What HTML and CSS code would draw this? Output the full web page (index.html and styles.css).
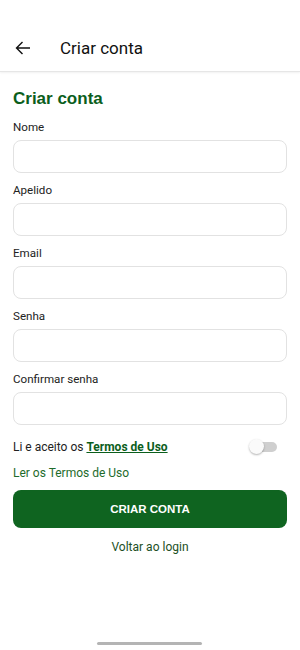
FILE: index.html
```html
<!DOCTYPE html>
<html lang="pt">
<head>
    <meta charset="UTF-8" />
    <meta name="viewport" content="width=device-width, initial-scale=1.0" />
    <title>Criar conta</title>
    <link rel="stylesheet" href="styles.css">
</head>
<body>
<div class="app">
    <div class="top-bar">
        <div class="bar">
            <svg class="back" width="16" height="16" viewBox="0 0 16 16">
                <path d="M15 8H1.5M7.5 2L1.5 8l6 6" fill="none" stroke="#111" stroke-width="1.4"/>
            </svg>
            <div class="bar-title">Criar conta</div>
        </div>
    </div>

    <form class="signup" onsubmit="return false">
        <div class="page-title">Criar conta</div>

        <label class="field-label">Nome</label>
        <input type="text" name="nome" />

        <label class="field-label">Apelido</label>
        <input type="text" name="apelido" />

        <label class="field-label">Email</label>
        <input type="email" name="email" />

        <label class="field-label">Senha</label>
        <input type="password" name="senha" />

        <label class="field-label">Confirmar senha</label>
        <input type="password" name="confirmar" />

        <div class="terms-row">
            <span>Li e aceito os <a href="#" class="terms-link">Termos de Uso</a></span>
            <span class="switch"><span class="thumb"></span></span>
        </div>

        <a href="#" class="read-terms">Ler os Termos de Uso</a>

        <button class="create" type="submit">CRIAR CONTA</button>

        <a href="#" class="back-login">Voltar ao login</a>
    </form>

    <div class="home-bar"></div>
</div>
</body>
</html>
```

FILE: styles.css
```css
html, body {
    margin: 0;
    padding: 0;
    box-sizing: border-box;
}

*, *::before, *::after {
    box-sizing: inherit;
}

body {
    font-family: Roboto, "Noto Sans", Arial, sans-serif;
    background: white;
    color: #1a1a1a;
}

.app {
    width: 300px;
    height: 650px;
    display: flex;
    flex-direction: column;
    position: relative;
}

.top-bar {
    padding-top: 24px;
    border-bottom: 1px solid #e6e6e6;
    box-shadow: 0 1px 2px rgba(0, 0, 0, 0.06);
}

.bar {
    height: 47px;
    display: flex;
    align-items: center;
    padding-left: 15px;
}

.back {
    display: block;
}

.bar-title {
    margin-left: 29px;
    font-size: 17px;
    color: #111;
}

.signup {
    display: flex;
    flex-direction: column;
    padding: 17px 13px 0;
}

.page-title {
    font-family: "Liberation Sans", Arial, sans-serif;
    font-size: 17px;
    line-height: 20px;
    font-weight: bold;
    color: #0b5e1c;
    margin-bottom: 10px;
}

.field-label {
    font-size: 11.6px;
    line-height: 16px;
    color: #222;
    margin-bottom: 5px;
}

input[type="text"],
input[type="email"],
input[type="password"] {
    height: 33px;
    width: 100%;
    border: 1px solid #e2e2e2;
    border-radius: 8px;
    padding: 0 10px;
    margin-bottom: 9px;
    font-size: 13px;
    outline: none;
}

input[type="password"]:last-of-type {
    margin-bottom: 12px;
}

.terms-row {
    display: flex;
    justify-content: space-between;
    align-items: center;
    height: 20px;
    font-size: 12px;
    color: #222;
    margin-bottom: 8px;
}

.terms-link {
    color: #0b5e1c;
    font-weight: bold;
    text-decoration: underline;
}

.switch {
    position: relative;
    width: 24px;
    height: 10px;
    border-radius: 5px;
    background: #cfcfcf;
    margin-right: 10px;
}

.thumb {
    position: absolute;
    left: -4px;
    top: -3px;
    width: 15px;
    height: 15px;
    border-radius: 50%;
    background: #fafafa;
    box-shadow: 0 1px 2px rgba(0, 0, 0, 0.3);
}

.read-terms {
    font-size: 12px;
    line-height: 16px;
    color: #1e6b2b;
    text-decoration: none;
    margin-bottom: 9px;
}

.create {
    height: 38px;
    width: 100%;
    border: none;
    border-radius: 8px;
    background-color: #0f6420;
    color: white;
    font-family: "Liberation Sans", Arial, sans-serif;
    font-size: 11.5px;
    font-weight: bold;
    cursor: pointer;
    margin-bottom: 11px;
}

.back-login {
    font-size: 12px;
    line-height: 16px;
    color: #1c4f25;
    text-align: center;
    text-decoration: none;
}

.home-bar {
    position: absolute;
    left: 97px;
    bottom: 5px;
    width: 105px;
    height: 3px;
    border-radius: 2px;
    background: #b4b4b4;
}
```
